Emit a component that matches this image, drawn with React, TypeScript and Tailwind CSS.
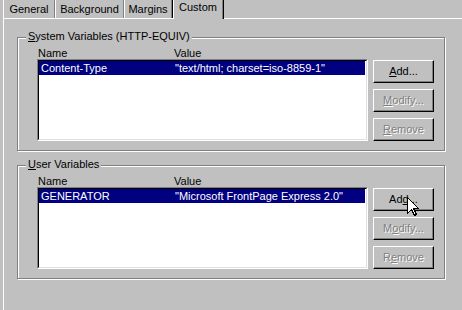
import React from "react"

const font = { fontFamily: '"Liberation Sans", Arial, sans-serif' }

type Btn = { label: React.ReactNode; disabled?: boolean }

const Button = ({ label, disabled }: Btn) => (
    <div className="w-[61px] h-[23px] border border-t-white border-l-white border-r-black border-b-black bg-[#c0c0c0] shadow-[inset_-1px_-1px_0_#808080] flex items-center justify-center">
        <span
            className={disabled ? "text-[#808080] [text-shadow:1px_1px_0_#fff]" : "text-black"}>
            {label}
        </span>
    </div>
)

const u = (s: string) => <span className="underline underline-offset-[1px]">{s}</span>

const Group = ({ title, name, value, buttons, extra }: {
    title: React.ReactNode
    name: string
    value: string
    buttons: Btn[]
    extra?: React.ReactNode
}) => (
    <div className="relative ml-[13px] w-[428px] h-[114px] border border-[#808080] shadow-[inset_1px_1px_0_#fff,1px_1px_0_#fff] pt-[10px] pl-[19px]">
        <div className="absolute left-[8px] top-[-8px] px-[2px] bg-[#c0c0c0] leading-[13px]">{title}</div>
        <div className="flex h-[11px] leading-[11px] pl-[1px]">
            <div className="w-[136px]">Name</div>
            <div>Value</div>
        </div>
        <div className="flex gap-[5px]">
            <div className="w-[331px] h-[82px] border border-t-[#808080] border-l-[#808080] border-r-white border-b-white">
                <div className="w-full h-full border border-t-black border-l-black border-r-[#dfdfdf] border-b-[#dfdfdf] bg-white">
                    <div className="flex h-[14px] items-center bg-[#000080] text-white mr-[1px]">
                        <div className="w-[136px] pl-[2px]">{name}</div>
                        <div>{value}</div>
                    </div>
                </div>
            </div>
            <div className="relative flex flex-col gap-[6px] pt-[1px]">
                {buttons.map((b, i) => (
                    <Button key={i} {...b} />
                ))}
                {extra}
            </div>
        </div>
    </div>
)

const Cursor = () => (
    <svg className="absolute left-[34px] top-[10px]" width="13" height="20" viewBox="0 0 13 20">
        <path
            d="M0.5 0.5 V16.5 L4.5 12.5 L7.5 18.5 L9.5 17.5 L6.5 11.5 H11.5 Z"
            fill="#fff"
            stroke="#000"
            strokeWidth="1"
            shapeRendering="crispEdges"/>
    </svg>
)

const tabs = ["General", "Background", "Margins"]
const tabWidths = ["w-[52px]", "w-[69px]", "w-[48px]"]

export default function App() {
    return (
        <div className="w-[462px] h-[310px] bg-[#c0c0c0] overflow-hidden text-[11px] text-black flex flex-col" style={font}>
            <div className="flex h-[18px] pl-[3px]">
                {tabs.map((t, i) => (
                    <div
                        key={t}
                        className={`${tabWidths[i]} h-[18px] border-l border-l-white border-r border-r-[#808080] shadow-[1px_0_0_#000] flex items-center justify-center pt-[1px] leading-[13px]`}>
                        {t}
                    </div>
                ))}
                <div className="relative z-10 w-[50px] h-[19px] ml-[1px] bg-[#c0c0c0] border-l border-l-white border-r border-r-[#808080] shadow-[1px_0_0_#000] flex justify-center pt-[1px] leading-[13px]">
                    Custom
                </div>
            </div>
            <div className="ml-[3px] flex-1 border-t border-l border-white pt-[18px] w-[480px]">
                <Group
                    title={<>{u("S")}ystem Variables (HTTP-EQUIV)</>}
                    name="Content-Type"
                    value={'"text/html; charset=iso-8859-1"'}
                    buttons={[
                        { label: <>{u("A")}dd...</> },
                        { label: <>{u("M")}odify...</>, disabled: true },
                        { label: <>{u("R")}emove</>, disabled: true },
                    ]}
                />
                <div className="h-[14px]" />
                <Group
                    title={<>{u("U")}ser Variables</>}
                    name="GENERATOR"
                    value={'"Microsoft FrontPage Express 2.0"'}
                    buttons={[
                        { label: <>Ad{u("d")}...</> },
                        { label: <>M{u("o")}dify...</>, disabled: true },
                        { label: <>R{u("e")}move</>, disabled: true },
                    ]}
                    extra={<Cursor />}
                />
            </div>
        </div>
    )
}
